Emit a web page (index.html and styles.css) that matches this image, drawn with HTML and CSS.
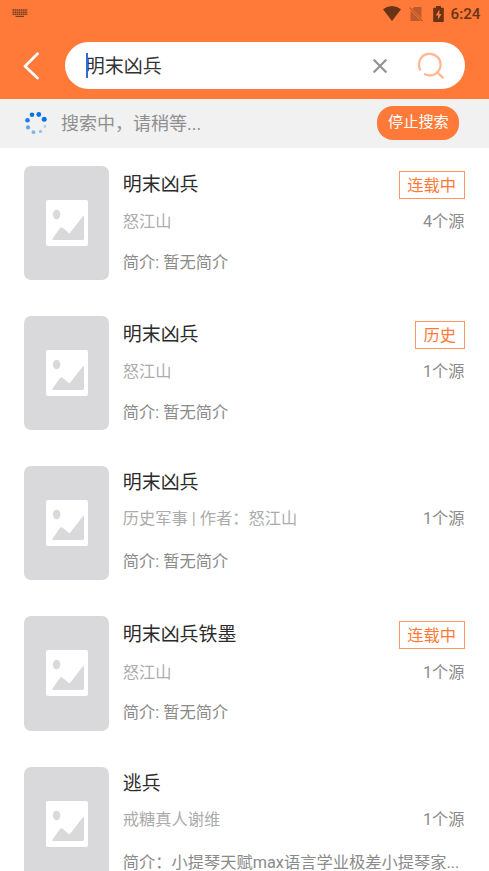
FILE: index.html
```html
<!DOCTYPE html>
<html lang="zh-CN">
<head>
<meta charset="utf-8">
<title>搜索</title>
<link rel="stylesheet" href="styles.css">
</head>
<body>
<svg width="0" height="0" class="defs">
  <symbol id="cover" viewBox="0 0 42 46">
    <rect width="42" height="46" rx="2" fill="#fff"/>
    <ellipse cx="10.6" cy="14.5" rx="3.7" ry="4.8" fill="#d9d9db"/>
    <path d="M6.400 38.800 14 28q1.300-1.500 2.600-.3l6.200 5.200q.8.500 1.500-.4L36.700 16.600q1.300-1.300 1.300.8V38.600q0 1.400-1.400 1.400H7.200q-1.500 0-.8-1.200z" fill="#d9d9db"/>
  </symbol>
</svg>
<header class="top">
  <div class="status">
    <svg class="keyboard" width="16" height="9" viewBox="0 0 16 9" fill="none" stroke="#55321f" stroke-opacity=".8">
      <path d="M.5 1H15.500M.5 3.200H15.500M.5 5.200H15.500" stroke-width="1.500" stroke-dasharray="1.700 .4"/>
      <path d="M3.500 7.400H12" stroke-width="1.200"/>
    </svg>
    <div class="status-right">
      <svg class="wifi" width="18" height="15" viewBox="0 0 18 15"><path d="M0 3.300Q9-3.100 18 3.300L9 15z" fill="#693317"/></svg>
      <svg class="sim" width="14" height="16" viewBox="0 0 14 16"><path d="M5.200 1H11.500q1 0 1 1V12.200L3.300 2.900zM1.500 4.600 11.800 15H2.500q-1 0-1-1z" fill="#bd5b2d"/><path d="M.5 1.500 13.500 15" stroke="#bd5b2d" stroke-width="1.100"/></svg>
      <svg class="battery" width="11" height="16" viewBox="0 0 11 16"><path d="M3 0H8V1.800H10q.8 0 .8.8V15.200q0 .8-.8.8H1q-.8 0-.8-.8V2.600q0-.8.8-.8H3z" fill="#693317"/><path d="M6.400 3.500 2.700 9.400H5V13.800L8.500 7.900H6.400z" fill="#ff7a38"/></svg>
      <span class="clock">6:24</span>
    </div>
  </div>
  <div class="searchbar">
    <svg class="back" width="17" height="28" viewBox="0 0 17 28"><path d="M14.500 1.800 2 14.200 14.500 26" fill="none" stroke="#fff" stroke-width="2.700" stroke-linecap="round" stroke-linejoin="round"/></svg>
    <div class="field">
      <span class="query"><i class="caret"></i>明末凶兵</span>
      <svg class="clear" width="16" height="16" viewBox="0 0 16 16"><path d="M2.300 2.300 13.700 13.700M13.700 2.300 2.300 13.700" stroke="#939393" stroke-width="2.300" stroke-linecap="round"/></svg>
      <svg class="find" width="28" height="28" viewBox="0 0 28 28" fill="none" stroke="#ffb892" stroke-width="2.300" stroke-linecap="round"><path d="M3.200 17.600A10.800 10.800 0 1 1 8 22.300M20.300 20.300 25.800 25.600"/></svg>
    </div>
  </div>
</header>
<div class="progress">
  <svg class="spinner" width="24" height="24" viewBox="0 0 24 24" fill="#0873e8">
    <circle cx="8" cy="3.800" r="2.300"/><circle cx="14.800" cy="3.500" r="2.400"/><circle cx="20.200" cy="8.200" r="2.500"/>
    <circle cx="3.500" cy="9.200" r="2.300" opacity=".92"/><circle cx="4" cy="16.400" r="2.100" opacity=".62"/>
    <circle cx="9.500" cy="21.200" r="1.900" opacity=".48"/><circle cx="16.500" cy="20.400" r="1.600" opacity=".38"/><circle cx="20.900" cy="15.400" r="1.300" opacity=".3"/>
  </svg>
  <span class="progress-text">搜索中，请稍等...</span>
  <span class="stop">停止搜索</span>
</div>
<main class="results">
  <article class="book">
    <div class="cover"><svg width="42" height="46"><use href="#cover"/></svg></div>
    <div class="info">
      <div class="head"><h2>明末凶兵</h2><span class="tag">连载中</span></div>
      <div class="meta"><span class="author">怒江山</span><span>4个源</span></div>
      <p class="intro">简介: 暂无简介</p>
    </div>
  </article>
  <article class="book">
    <div class="cover"><svg width="42" height="46"><use href="#cover"/></svg></div>
    <div class="info">
      <div class="head"><h2>明末凶兵</h2><span class="tag">历史</span></div>
      <div class="meta"><span class="author">怒江山</span><span>1个源</span></div>
      <p class="intro">简介: 暂无简介</p>
    </div>
  </article>
  <article class="book plain">
    <div class="cover"><svg width="42" height="46"><use href="#cover"/></svg></div>
    <div class="info">
      <div class="head"><h2>明末凶兵</h2></div>
      <div class="meta"><span class="author">历史军事 | 作者：怒江山</span><span>1个源</span></div>
      <p class="intro">简介: 暂无简介</p>
    </div>
  </article>
  <article class="book">
    <div class="cover"><svg width="42" height="46"><use href="#cover"/></svg></div>
    <div class="info">
      <div class="head"><h2>明末凶兵铁墨</h2><span class="tag">连载中</span></div>
      <div class="meta"><span class="author">怒江山</span><span>1个源</span></div>
      <p class="intro">简介: 暂无简介</p>
    </div>
  </article>
  <article class="book plain">
    <div class="cover"><svg width="42" height="46"><use href="#cover"/></svg></div>
    <div class="info">
      <div class="head"><h2>逃兵</h2></div>
      <div class="meta"><span class="author">戒糖真人谢维</span><span>1个源</span></div>
      <p class="intro">简介：小提琴天赋max语言学业极差小提琴家...</p>
    </div>
  </article>
</main>
</body>
</html>
```

FILE: styles.css
```css
* { box-sizing: border-box; }
body {
  margin: 0;
  height: 871px;
  overflow: hidden;
  display: flex;
  flex-direction: column;
  background: #fff;
  font-family: Roboto, "Noto Sans CJK SC", sans-serif;
  color: #333;
}
.defs { position: absolute; }
svg { display: block; flex: none; }

.top { flex: none; height: 98.6px; background: #ff7a38; }
.status { height: 42.3px; display: flex; justify-content: space-between; padding: 0 8.5px 0 12px; }
.keyboard { margin-top: 9px; }
.status-right { display: flex; height: 27px; align-items: center; }
.wifi { margin-right: 7.5px; }
.sim { margin-right: 10px; }
.battery { margin-right: 7px; }
.clock { font-size: 15.2px; font-weight: 500; line-height: 27px; padding-top: 1px; color: #693317; }
.searchbar { display: flex; align-items: center; padding: 0 24px 0 23px; height: 46.7px; }
.back { margin-right: 25px; }
.field {
  flex: 1;
  height: 46.7px;
  border-radius: 24px;
  background: #fff;
  display: flex;
  align-items: center;
  padding: 0 20px 0 20.7px;
}
.query { flex: 1; position: relative; top: 1px; font-size: 19px; line-height: 28px; }
.caret { position: absolute; left: .3px; top: 0; width: 2.5px; height: 25px; background: #3467d6; }
.clear { margin-right: 29px; }

.progress {
  flex: none;
  height: 49px;
  display: flex;
  align-items: center;
  padding: 0 29.6px 0 24px;
  background: #f1f1f1;
}
.progress-text { flex: 1; margin-left: 13px; padding-top: 1px; font-size: 18px; line-height: 26px; color: #8f8f8f; }
.stop {
  height: 34px;
  width: 82px;
  border-radius: 16px;
  background: #ff7a38;
  color: #fff;
  font-size: 15.2px;
  line-height: 33px;
  text-align: center;
}

.results { padding: 18px 24.4px 0 24.4px; display: flex; flex-direction: column; gap: 36px; }
.book { flex: none; display: flex; height: 114.25px; }
.cover {
  flex: none;
  width: 84.6px;
  height: 114.25px;
  border-radius: 7px;
  background: #d9d9db;
  display: flex;
  align-items: center;
  justify-content: center;
}
.info { flex: 1; min-width: 0; margin-left: 13.8px; display: flex; flex-direction: column; }
.head { height: 36px; margin-bottom: 8.5px; display: flex; justify-content: space-between; }
h2 { margin: 0; font-size: 18.95px; font-weight: 400; line-height: 37px; color: #2b2b2b; }
.tag {
  margin-top: 5px;
  height: 28px;
  padding: 0 7.5px;
  border: 1px solid #ff9561;
  font-size: 16.25px;
  line-height: 27px;
  color: #ff7a38;
}
.meta {
  height: 24px;
  margin-bottom: 16.5px;
  display: flex;
  justify-content: space-between;
  font-size: 16.25px;
  line-height: 24px;
  color: #8c8c8c;
}
.author { color: #acacac; }
.intro { margin: 0; font-size: 16.25px; line-height: 24px; color: #8a8a8a; white-space: nowrap; }
.plain .head { height: 32.7px; }
.plain h2 { line-height: 34px; }
.plain .meta { margin-bottom: 19px; }
```
